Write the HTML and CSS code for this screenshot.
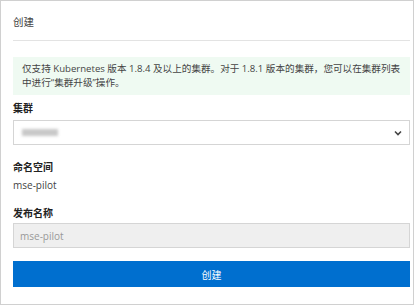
FILE: index.html
```html
<!DOCTYPE html>
<html lang="zh-CN">
<head>
  <meta charset="UTF-8" />
  <title>创建</title>
  <link rel="stylesheet" href="styles.css">
</head>
<body>
  <div class="dialog">
    <div class="dialog-title">创建</div>

    <div class="notice">
      仅支持 Kubernetes 版本 1.8.4 及以上的集群。对于 1.8.1 版本的集群，您可以在集群列表中进行“集群升级”操作。
    </div>

    <div class="field field-cluster">
      <label>集群</label>
      <div class="select">
        <span class="blurred"></span>
        <svg class="chevron" width="8" height="6" viewBox="0 0 8 6">
          <path d="M1 1.5 L4 4.5 L7 1.5" fill="none" stroke="#444" stroke-width="1.6" />
        </svg>
      </div>
    </div>

    <div class="field field-ns">
      <label>命名空间</label>
      <div class="value">mse-pilot</div>
    </div>

    <div class="field field-name">
      <label>发布名称</label>
      <input class="input" type="text" value="mse-pilot" disabled>
    </div>

    <button class="submit">创建</button>
  </div>
</body>
</html>
```

FILE: styles.css
```css
body {
  margin: 0;
  font-family: "Open Sans", "Noto Sans CJK SC", sans-serif;
  font-size: 10px;
  color: #333;
  background: white;
}

.dialog {
  box-sizing: border-box;
  width: 414px;
  height: 305px;
  border: 1px solid #d0d0d0;
  padding: 0 3px 0 12px;
}

.dialog-title {
  height: 39px;
  line-height: 42px;
  font-size: 10.5px;
  color: #444;
  border-bottom: 1px solid #e3e3e3;
}

.notice {
  margin-top: 16px;
  padding: 5px 6px 5px 9px;
  background: #effaf2;
  line-height: 14px;
  font-size: 9.6px;
  color: #444;
}

.field label {
  display: block;
  font-weight: bold;
  font-size: 10px;
  line-height: 16px;
  color: #222;
}

.field-cluster {
  margin-top: 5px;
}

.field-ns {
  margin-top: 14px;
}

.field-name {
  margin-top: 12px;
}

.select {
  box-sizing: border-box;
  height: 25px;
  margin-top: 4px;
  border: 1px solid #d5d5d5;
  display: flex;
  align-items: center;
  justify-content: space-between;
  padding: 0 7px 0 6px;
}

.blurred {
  width: 36px;
  height: 7px;
  margin-left: 2px;
  background: #c8c8c8;
  filter: blur(1.5px);
}

.value {
  margin-top: 2px;
  line-height: 16px;
  color: #444;
}

.input {
  display: block;
  box-sizing: border-box;
  width: 100%;
  height: 25px;
  margin: 2px 0 0;
  border: 1px solid #d5d5d5;
  background: #efefef;
  padding: 0 6px;
  font-family: inherit;
  font-size: 10px;
  color: #999;
}

.submit {
  display: block;
  width: 100%;
  height: 26px;
  margin-top: 13px;
  border: none;
  background: #006fcf;
  color: white;
  font-family: inherit;
  font-size: 10px;
}
```
